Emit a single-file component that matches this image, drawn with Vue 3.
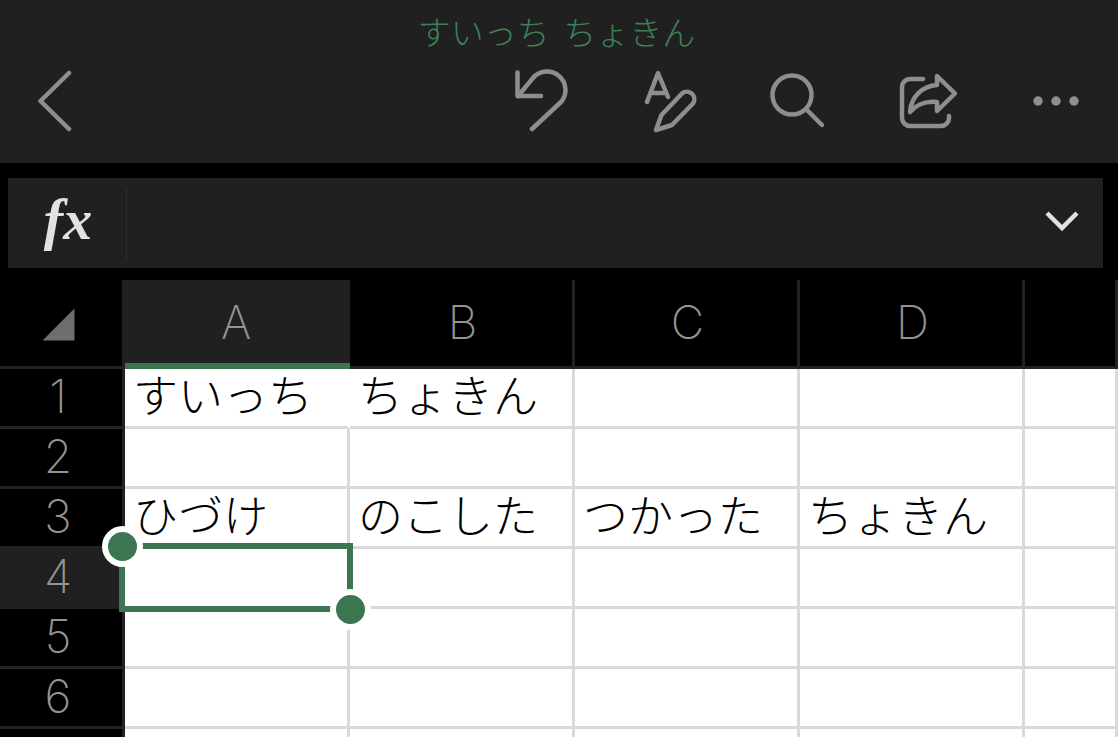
<template>
  <div class="screen">
    <!-- top toolbar -->
    <header class="toolbar">
      <div class="doc-title">すいっち ちょきん</div>
      <div class="tool-row">
        <svg class="icon" viewBox="0 0 64 64"><path d="M31 4 2.5 32 31 60" /></svg>
        <div class="tools">
          <svg class="icon" viewBox="0 0 64 64">
            <path d="M5.5 3.5V27H29" />
            <path d="M6 27 21 9A17.5 17.5 0 0 1 49 33L20 60" />
          </svg>
          <svg class="icon" viewBox="0 0 64 64">
            <path d="M7 33 18 4 28 28M11 24H26" />
            <path d="M16 61 21.5 46 42 24.5A7.5 7.5 0 0 1 53 34.5L32 56Z" />
          </svg>
          <svg class="icon" viewBox="0 0 64 64">
            <circle cx="24" cy="26" r="19.5" />
            <path d="M38 40 54 56" />
          </svg>
          <svg class="icon" viewBox="0 0 64 64">
            <path d="M27 10H14A8 8 0 0 0 6 18V49A8 8 0 0 0 14 57H45A8 8 0 0 0 53 49V47" />
            <path d="M41 7 59 24.5 41 42V33C30 32 21 35 14 43 15 27 27 17 41 16Z" />
          </svg>
          <svg class="icon" viewBox="0 0 64 64">
            <circle class="dot" cx="14" cy="32" r="4.7" />
            <circle class="dot" cx="32" cy="32" r="4.7" />
            <circle class="dot" cx="50" cy="32" r="4.7" />
          </svg>
        </div>
      </div>
    </header>

    <!-- formula bar -->
    <div class="formula-bar">
      <div class="fx-box"><span class="fx">fx</span></div>
      <div class="formula-input"></div>
      <svg class="chevron" viewBox="0 0 34 22"><path d="M2 3 17 18 32 3" /></svg>
    </div>

    <!-- sheet -->
    <div class="sheet">
      <div class="corner"><div class="corner-mark"></div></div>
      <div
        v-for="col in columns"
        :key="col"
        class="col-head"
        :class="{ active: col === 'A' }"
      >
        {{ col }}
      </div>

      <template v-for="(row, r) in rows" :key="r">
        <div class="row-head" :class="{ active: row.num === 4 }">{{ row.num }}</div>
        <div
          v-for="(text, i) in row.cells"
          :key="i"
          class="cell"
          :class="{ open: row.num === 1 && i === 0 }"
        >
          {{ text }}
        </div>
      </template>

      <div class="selection"></div>
      <div class="handle handle-tl"></div>
      <div class="handle handle-br"></div>
    </div>
  </div>
</template>

<script setup>
const columns = ['A', 'B', 'C', 'D', '']

// last row is only a sliver at the bottom of the screen, its number doesn't show
const rows = [
  { num: 1, cells: ['すいっち', 'ちょきん', '', '', ''] },
  { num: 2, cells: ['', '', '', '', ''] },
  { num: 3, cells: ['ひづけ', 'のこした', 'つかった', 'ちょきん', ''] },
  { num: 4, cells: ['', '', '', '', ''] },
  { num: 5, cells: ['', '', '', '', ''] },
  { num: 6, cells: ['', '', '', '', ''] },
  { num: '', cells: ['', '', '', '', ''] }
]
</script>

<style scoped>
.screen {
  width: 1118px;
  height: 737px;
  overflow: hidden;
  background: #000;
  font-family: "Noto Sans CJK JP", "Noto Sans", sans-serif;
}

/* toolbar */
.toolbar {
  height: 163px;
  box-sizing: border-box;
  padding-top: 12px;
  background: #202020;
}
.doc-title {
  height: 44px;
  line-height: 38px;
  margin-bottom: 13px;
  padding-right: 5px;
  text-align: center;
  font-size: 33px;
  word-spacing: 6px;
  font-weight: 300;
  color: #3f7f55;
  white-space: nowrap;
}
.tool-row {
  display: flex;
  justify-content: space-between;
  padding: 0 30px 0 38px;
}
.tools {
  display: flex;
  gap: 64px;
}
.icon {
  width: 64px;
  height: 64px;
  fill: none;
  stroke: #8e8e8e;
  stroke-width: 4.5;
  stroke-linecap: round;
  stroke-linejoin: round;
}
.icon .dot {
  fill: #8e8e8e;
  stroke: none;
}

/* formula bar */
.formula-bar {
  display: flex;
  align-items: center;
  width: 1095px;
  height: 90px;
  margin: 15px 0 12px 8px;
  background: #202020;
}
.fx-box {
  width: 119px;
  height: 71px;
  display: flex;
  align-items: center;
  justify-content: center;
  padding: 0 0 6px 2px;
  box-sizing: border-box;
  border-right: 1px solid #2f2f2f;
}
.fx {
  font-family: "Liberation Serif", serif;
  font-size: 58px;
  font-weight: 700;
  font-style: italic;
  line-height: 1;
  color: #e2e2e2;
}
.formula-input {
  flex: 1;
}
.chevron {
  width: 34px;
  height: 22px;
  margin: 0 24px 5px 0;
  fill: none;
  stroke: #e2e2e2;
  stroke-width: 4.5;
}

/* sheet grid */
.sheet {
  position: relative;
  display: grid;
  grid-template-columns: 125px 225px 225px 225px 225px 93px;
  grid-template-rows: 89px repeat(7, 60px);
}
.corner,
.col-head,
.row-head {
  box-sizing: border-box;
  display: flex;
  align-items: center;
  justify-content: center;
  background: #000;
  font-family: Inter, "Liberation Sans", sans-serif;
  font-size: 46px;
  font-weight: 200;
  color: #949494;
}
.corner {
  border-bottom: 3px solid #222;
  border-right: 3px solid #000;
  padding-right: 5px;
}
.corner-mark {
  width: 32px;
  height: 32px;
  margin-top: 3px;
  background: #6f6f6f;
  clip-path: polygon(100% 0, 100% 100%, 0 100%);
}
.col-head {
  border-bottom: 3px solid #222;
  border-right: 3px solid #222;
  padding: 0 0 3px 3px;
}
.col-head.active {
  position: relative;
  margin-left: -3px;
  background: #202020;
  border-right-color: #202020;
  border-bottom: 0;
  padding-bottom: 6px;
}
.col-head.active::after {
  content: "";
  position: absolute;
  left: 3px;
  right: -3px;
  bottom: 0;
  height: 6px;
  background: #3b7650;
}
.row-head {
  border-bottom: 3px solid #222;
  border-right: 3px solid #222;
  padding: 0 6px 3px 0;
}
.row-head.active {
  background: #202020;
}
.cell {
  box-sizing: border-box;
  display: flex;
  align-items: center;
  padding: 0 0 8px 8px;
  background: #fff;
  border-bottom: 3px solid #d9d9d9;
  border-right: 3px solid #d9d9d9;
  font-size: 45px;
  font-weight: 300;
  color: #000;
  white-space: nowrap;
}
.cell.open {
  border-right-color: #fff;
}

/* selected cell */
.selection {
  position: absolute;
  left: 119px;
  top: 263px;
  width: 234px;
  height: 69px;
  box-sizing: border-box;
  border: 6px solid #3b7650;
}
.handle {
  position: absolute;
  width: 29px;
  height: 29px;
  border-radius: 50%;
  background: #3b7650;
  box-sizing: content-box;
  border: 6px solid #fff;
}
.handle-tl {
  left: 102px;
  top: 246px;
}
.handle-br {
  left: 330px;
  top: 309px;
}
</style>

<style>
html,
body {
  margin: 0;
  background: #000;
}
</style>
